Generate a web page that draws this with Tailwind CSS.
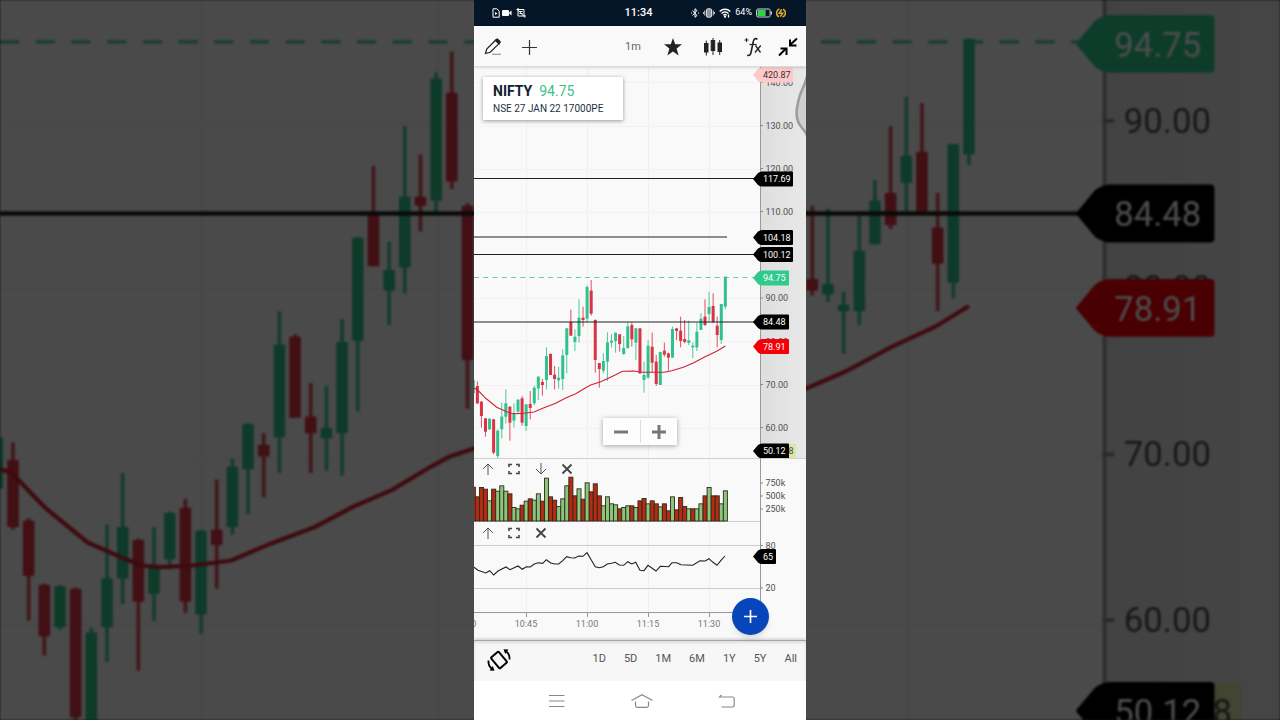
<!DOCTYPE html>
<html lang="en">
<head>
    <meta charset="UTF-8">
    <meta name="viewport" content="width=device-width, initial-scale=1.0">
    <title>NIFTY 17000PE | Chart</title>
    <script src="https://cdn.jsdelivr.net/npm/@tailwindcss/browser@4"></script>
</head>
<body class="relative min-h-screen overflow-hidden bg-[#4a4a4a] font-['Roboto',sans-serif]">
    <!-- Enlarged, dimmed chart behind the phone -->
    <div class="absolute inset-0 overflow-hidden" aria-hidden="true">
        <svg class="block h-full w-full blur-[1px]" viewBox="474 266.6 332 186.8" preserveAspectRatio="xMidYMid slice">
            <use href="#priceChart"></use>
        </svg>
        <div class="absolute inset-0 bg-black/70"></div>
    </div>

    <main class="relative mx-auto flex min-h-screen w-full max-w-[332px] flex-col overflow-hidden bg-[#f9f9f9]">
        <!-- Status bar -->
        <header class="grid h-[26px] grid-cols-[1fr_auto_1fr] items-center bg-[#061629] pr-5 pl-[17px] text-white">
            <div class="flex items-center gap-[1px]">
                <svg class="h-[10px] w-[10px]" viewBox="0 0 10 10" fill="none" stroke="#fff"><path d="M2 .8h3.800L8.200 3v6.200H2z"/><path d="M4 4l2.500 1.500L4 7z" fill="#fff" stroke="none"/></svg>
                <svg class="h-[10px] w-[10px]" viewBox="0 0 10 10" fill="#fff"><rect y="2" width="7" height="6" rx="1"/><path d="M7.300 4.300 9.500 2.500v5L7.300 5.700z"/></svg>
                <svg class="ml-[3px] h-[10px] w-[10px]" viewBox="0 0 10 10" fill="none" stroke="#fff"><path d="M.5 1.500h7.500v6.500M2 0v8h8"/><path d="M3.500 3.500h3M3.500 5.500h3M1 1l8 8.500"/></svg>
            </div>
            <time class="text-center text-[11px] font-medium">11:34</time>
            <div class="flex items-center justify-end gap-[4px]">
                <svg class="h-[10px] w-[8px] shrink-0" viewBox="0 0 8 10" fill="none" stroke="#fff"><path d="M1.500 2.500l4.500 5L4 9.300V.7L6 2.500l-4.500 5"/><path d="M0 5h1M7 5h1"/></svg>
                <svg class="h-[10px] w-[12px] shrink-0" viewBox="0 0 12 10" fill="none" stroke="#d5dae0"><rect x="3.500" y=".8" width="5" height="8.400" rx="1" fill="#8d959f"/><path d="M1.800 2.500v5M10.200 2.500v5M.4 4v2M11.600 4v2"/></svg>
                <svg class="h-[10px] w-[12px] shrink-0" viewBox="0 0 12 10" fill="none" stroke="#fff" stroke-width="1.300"><path d="M.7 3.500c3-3 7.600-3 10.600 0M2.500 5.500c2-2 5-2 7 0M4.300 7.300c1-.9 2.400-.9 3.400 0"/><circle cx="6" cy="8.700" r=".5" fill="#fff"/><path d="M9.500 6.500v3"/></svg>
                <span class="text-[9px]">64%</span>
                <svg class="h-[10px] w-[16px] shrink-0" viewBox="0 0 16 10"><rect x=".6" y="1" width="13.500" height="8" rx="1.500" fill="#061629" stroke="#d5dae0"/><rect x="1.600" y="2" width="8" height="6" fill="#35cf4c"/><path d="M15.500 3.500v3" stroke="#d5dae0"/></svg>
                <svg class="h-[10px] w-[10px] shrink-0" viewBox="0 0 10 10" fill="none" stroke="#d9a62a" stroke-width="1.600"><path d="M3 8.800A4.200 4.200 0 0 1 3.500 1M7 1.200a4.200 4.200 0 0 1-.5 7.800"/><path d="M5.800 1.500 3.300 5.200h3.400L4.200 8.600"/></svg>
            </div>
        </header>

        <!-- Toolbar -->
        <nav class="relative z-10 flex h-[41px] items-center border-b border-[#dcdcdc] bg-[#f9f9f9] pt-[2px] pr-[3px] pl-px shadow-sm">
            <button class="flex h-9 w-9 items-center justify-center" aria-label="Draw">
                <svg class="h-[18px] w-[18px]" viewBox="0 0 18 18" fill="none" stroke="#222" stroke-width="1.200"><path d="M1.500 15.500l1.200-4.500L12 1.800c.8-.8 1.500-.8 2.200-.1l1.300 1.200c.8.8.7 1.500 0 2.200L6.200 14.300z"/><path d="M11.500 2.500l3.500 3.500 1-2-3-2.800z" fill="#222"/><path d="M8 16.300h9" stroke="#999"/></svg>
            </button>
            <button class="flex h-9 w-9 items-center justify-center" aria-label="Add">
                <svg class="h-[15px] w-[15px]" viewBox="0 0 15 15" stroke="#333" stroke-width="1.200"><path d="M7.500 0v15M0 7.500h15"/></svg>
            </button>
            <button class="ml-auto h-9 w-10 text-[11px] text-[#666]">1m</button>
            <button class="flex h-9 w-10 items-center justify-center" aria-label="Favourites">
                <svg class="h-[18px] w-[18px]" viewBox="0 0 18 18" fill="#222"><path d="M9 0l2.200 6.300H18l-5.400 4.200 2 7L9 13.400l-5.600 4.100 2-7L0 6.300h6.800z"/></svg>
            </button>
            <button class="flex h-9 w-10 items-center justify-center" aria-label="Chart type">
                <svg class="h-[19px] w-[18px]" viewBox="0 0 18 19" fill="#222" stroke="#222"><rect x=".5" y="5.500" width="3.500" height="8.500"/><rect x="7.200" y="2.500" width="3.500" height="10"/><rect x="14" y="5" width="3.500" height="8.500"/><path d="M2.300 2.500v15M9 0v17M15.700 2v15"/></svg>
            </button>
            <button class="flex h-9 w-10 items-center justify-center" aria-label="Indicators">
                <svg class="h-[20px] w-[18px]" viewBox="0 0 18 20" fill="none" stroke="#222"><path d="M2.500 1v4M.5 3h4" stroke-width="1"/><path d="M13.500 2.300c-2-1.500-3.500-.6-4.200 2.200L7 15.500c-.5 2.600-1.800 3.600-3.700 2.500" stroke-width="1.600"/><path d="M5.500 7.500h7" stroke-width="1.200"/><path d="M11.500 8.500l5 7M16.800 8.500l-5.800 7" stroke-width="1.300"/></svg>
            </button>
            <button class="flex h-9 w-[30px] items-center justify-center" aria-label="Exit full screen">
                <svg class="h-[20px] w-[20px]" viewBox="0 0 20 20" fill="none" stroke="#000" stroke-width="2"><path d="M19 1.500l-6.500 6M1 18.500l6.500-6.500"/><path d="M12 2.500v6h6.500M2.500 11.500h6v6.500"/></svg>
            </button>
        </nav>

        <section class="relative">
            <!-- Price pane -->
            <div class="relative">
                <svg class="block w-full" viewBox="474 67 332 391" role="img" aria-label="NIFTY price chart">
                    <g id="priceChart"></g>
                    <path d="M807 76Q805 84 802 90T797 108T802 128T807 140" fill="#cfcfcf" stroke="#9b9b9b" stroke-width="2.500"/>
                </svg>
                <div class="absolute top-[10px] left-[9px] w-[140px] bg-white px-[10px] py-[4px] whitespace-nowrap shadow-[0_1px_4px_rgba(0,0,0,0.4)]">
                    <h1 class="flex items-baseline gap-[7px] text-[14px] leading-[20px] font-bold text-[#10202f]">NIFTY <span class="font-normal text-[#3cc486]">94.75</span></h1>
                    <p class="text-[10px] leading-[15px] text-[#24323f]">NSE 27 JAN 22 17000PE</p>
                </div>
                <div class="absolute bottom-[13px] left-[129px] flex h-[27px] w-[74px] items-center divide-x divide-[#ddd] bg-[#fdfdfd] shadow-[0_1px_5px_rgba(0,0,0,0.35)]">
                    <button class="flex h-[23px] flex-1 items-center justify-center" aria-label="Zoom out">
                        <svg class="h-[14px] w-[14px]" viewBox="0 0 14 14" stroke="#777" stroke-width="3"><path d="M0 7h14"/></svg>
                    </button>
                    <button class="flex h-[23px] flex-1 items-center justify-center" aria-label="Zoom in">
                        <svg class="h-[14px] w-[14px]" viewBox="0 0 14 14" stroke="#777" stroke-width="3"><path d="M0 7h14M7 0v14"/></svg>
                    </button>
                </div>
            </div>

            <!-- Volume pane -->
            <div class="relative">
                <svg class="block w-full" viewBox="474 458 332 64" role="img" aria-label="Volume" id="volumeChart"></svg>
                <div class="absolute top-0 left-0 flex h-[22px] items-center">
                    <button class="flex w-[27px] justify-center" aria-label="Move volume up"><svg class="h-3 w-3" viewBox="0 0 12 12" fill="none" stroke="#555"><path d="M6 12V1M1 6l5-5 5 5"/></svg></button>
                    <button class="flex w-[26px] justify-center" aria-label="Maximise volume"><svg class="h-3 w-3" viewBox="0 0 12 12" fill="none" stroke="#444" stroke-width="1.600"><path d="M1 4V1.500h3M8 1.500h3V4M11 8v2.500H8M4 10.500H1V8"/></svg></button>
                    <button class="flex w-[27px] justify-center" aria-label="Move volume down"><svg class="h-3 w-3" viewBox="0 0 12 12" fill="none" stroke="#555"><path d="M6 0v11M1 6l5 5 5-5"/></svg></button>
                    <button class="flex w-[26px] justify-center" aria-label="Close volume"><svg class="h-3 w-3" viewBox="0 0 12 12" fill="none" stroke="#444" stroke-width="1.800"><path d="M1.500 1.500l9 9M10.500 1.500l-9 9"/></svg></button>
                </div>
            </div>

            <!-- RSI pane and time axis -->
            <div class="relative">
                <svg class="block w-full" viewBox="474 522 332 118" role="img" aria-label="RSI" id="rsiChart"></svg>
                <div class="absolute top-0 left-0 flex h-[22px] items-center">
                    <button class="flex w-[27px] justify-center" aria-label="Move RSI up"><svg class="h-3 w-3" viewBox="0 0 12 12" fill="none" stroke="#555"><path d="M6 12V1M1 6l5-5 5 5"/></svg></button>
                    <button class="flex w-[26px] justify-center" aria-label="Maximise RSI"><svg class="h-3 w-3" viewBox="0 0 12 12" fill="none" stroke="#444" stroke-width="1.600"><path d="M1 4V1.500h3M8 1.500h3V4M11 8v2.500H8M4 10.500H1V8"/></svg></button>
                    <button class="flex w-[27px] justify-center" aria-label="Close RSI"><svg class="h-3 w-3" viewBox="0 0 12 12" fill="none" stroke="#444" stroke-width="1.800"><path d="M1.500 1.500l9 9M10.500 1.500l-9 9"/></svg></button>
                </div>
            </div>

            <button class="absolute right-[37px] bottom-[5px] flex h-[37px] w-[37px] items-center justify-center rounded-full bg-[#0646ba] shadow-md" aria-label="New order">
                <svg class="h-[13px] w-[13px]" viewBox="0 0 14 14" stroke="#fff" stroke-width="1.800"><path d="M7 0v14M0 7h14"/></svg>
            </button>
        </section>

        <!-- Range picker -->
        <div class="flex h-[41px] items-center border-t border-[#a5a5a5] bg-[#f7f7f7] pr-[9px] pb-[3px] pl-[13px] shadow-[0_-1px_3px_rgba(0,0,0,0.2),inset_0_2px_3px_rgba(0,0,0,0.1)]">
            <button aria-label="Rotate screen">
                <svg class="h-[24px] w-[24px]" viewBox="0 0 24 24" fill="none" stroke="#000"><rect x="7" y="5" width="10" height="14" rx="1" stroke-width="2" transform="rotate(-40 12 12)"/><path d="M22.500 11.500c.3-3.500-1-6.500-3.500-8.300M1.500 12.500c-.3 3.500 1 6.500 3.500 8.300" stroke-width="1.800"/><path d="M16.500 1.200l5 .2-3.300 4.500zM7.500 22.800l-5-.2 3.300-4.500z" fill="#000" stroke="none"/></svg>
            </button>
            <div class="ml-auto flex gap-[18px] text-[11px] text-[#555]">
                <button>1D</button>
                <button>5D</button>
                <button>1M</button>
                <button>6M</button>
                <button>1Y</button>
                <button>5Y</button>
                <button>All</button>
            </div>
        </div>

        <!-- System navigation -->
        <footer class="flex min-h-[39px] flex-1 items-center justify-center gap-16 bg-white pl-[3px]">
            <button aria-label="Recent apps"><svg class="h-[14px] w-[20px]" viewBox="0 0 20 14" stroke="#888" stroke-width="1.200"><path d="M2 1.500h15.500M2 7h15.500M2 12.500h15.500"/></svg></button>
            <button aria-label="Home"><svg class="h-[14px] w-[22px]" viewBox="0 0 22 14" fill="none" stroke="#888" stroke-width="1.200"><path d="M.5 6.500 11 .8l10.500 5.700M4.500 7.500v4c0 1 .6 1.800 1.800 1.800h9.400c1.200 0 1.800-.8 1.800-1.800v-4"/></svg></button>
            <button aria-label="Back"><svg class="h-[14px] w-[20px]" viewBox="0 0 20 14" fill="none" stroke="#888" stroke-width="1.200"><path d="M4.500.8 2.500 3h13c1 0 1.700.7 1.700 1.700v6.600c0 1-.7 1.700-1.700 1.700H4.500"/></svg></button>
        </footer>
    </main>

    <script>
        const GREEN = '#2fc28c';
        const RED = '#d93344';
        const xAt = i => 473.3 + i * 4.065;

        // colour, high, top, bottom, low (thirds of a unit below y=260)
        const candles = [
            ['g',360,360,400,417],['r',364,378,430,432],['r',423,425,468,503],['r',474,475,515,530],['g',475,476,508,510],
            ['r',477,478,578,583],['g',508,512,588,594],['g',428,470,508,535],['g',388,430,470,490],['r',439,440,488,542],
            ['g',430,460,482,503],['g',418,419,455,463],['r',408,415,488,497],['g',432,433,498,513],['r',393,432,444,478],
            ['g',377,383,430,436],['g',349,350,385,420],['r',357,366,375,407],['g',262,288,360,388],['r',280,282,345,345],
            ['r',318,344,357,388],['g',320,353,361,386],['g',268,286,357,390],['g',204,205,285,340],['r',149,186,227,227],
            ['g',208,230,246,273],['g',118,173,228,248],['r',140,173,180,200],['g',76,81,176,187],['r',60,92,161,167],
            ['r',178,180,300,338],['r',309,309,327,383],['g',280,303,332,340],['g',217,247,305,363],['g',222,242,248,263],
            ['g',218,218,243,278],['r',222,223,252,275],['g',228,264,282,284],['g',187,199,264,266],['r',188,195,238,260],
            ['g',205,205,248,300],['r',205,205,340,342],['g',305,345,360,398],['g',240,257,353,356],['r',218,260,308,338],
            ['r',285,305,372,378],['g',275,276,375,375],['r',248,272,284,290],['r',278,280,293,332],['g',200,207,293,293],
            ['r',205,205,213,240],['r',170,212,243,262],['r',180,237,246,250],['g',182,241,249,255],['g',247,257,262,295],
            ['g',188,215,262,273],['g',160,176,210,210],['r',118,170,195,198],['g',95,141,162,187],['r',100,138,187,187],
            ['r',170,197,225,262],['g',132,132,240,252],['g',50,50,140,148]
        ];

        const average = [
            [0,385],[9,388],[35,415],[68,442],[95,454],[110,460],[125,461],[150,460],[180,456],[210,443],[245,430],[275,414],
            [305,401],[335,383],[350,375],[380,365],[400,356],[425,344],[445,334],[480,333],[500,337],[570,337],[593,332],
            [628,322],[658,309],[693,290],[728,274],[754,258]
        ];

        // bar tops, thirds of a unit below y=455
        const volumes = [
            95,124,96,101,136,101,107,91,107,115,156,160,149,137,130,134,115,137,68,124,134,153,130,91,65,121,100,131,82,109,85,
            121,151,124,145,148,160,156,151,151,156,136,129,145,136,145,154,145,166,124,163,126,153,160,160,160,145,121,96,121,121,145,106
        ];
        const volumeColors = 'rrrrgrgggrggrgrggrgrrgggrrgrgrrrggggrggrgrrgrrgrrgrrrgrggrgrrgg';

        const rsi = [
            [0,337],[12,346],[35,354],[47,347],[59,360],[72,348],[96,336],[108,344],[132,333],[145,343],[157,335],[169,336],
            [181,327],[193,323],[206,325],[217,314],[230,324],[242,327],[254,327],[266,317],[278,305],[290,308],[302,309],
            [314,303],[327,304],[339,293],[352,315],[364,335],[376,338],[388,335],[400,327],[412,325],[424,322],[436,330],
            [449,331],[461,320],[473,327],[485,322],[498,346],[510,347],[522,331],[546,348],[559,334],[584,335],[594,323],
            [608,323],[621,329],[656,331],[678,317],[694,318],[705,311],[717,322],[729,331],[741,316],[753,303]
        ];

        const line = (points, top) => points.map(([x, y]) => `${(474 + x / 3).toFixed(1)},${(top + y / 3).toFixed(1)}`).join(' ');

        const tag = (y, text, fill, color = '#fff', right = 789) => `
            <path d="M753 ${y}L758 ${y - 6}Q760 ${y - 7.500} 762 ${y - 7.500}H${right - 1}Q${right} ${y - 7.500} ${right} ${y - 6.500}V${y + 6.500}Q${right} ${y + 7.500} ${right - 1} ${y + 7.500}H762Q760 ${y + 7.500} 758 ${y + 6}z" fill="${fill}"/>
            <text x="763" y="${y + 3.300}" font-size="9" fill="${color}">${text}</text>`;

        const axisLabel = (y, text) => `
            <path d="M760 ${y}h3" stroke="#888"/>
            <text x="765.500" y="${y + 3}" font-size="9" fill="#505050">${text}</text>`;

        const columns = (y1, y2) => [526, 587, 648, 709].map(x => `<path d="M${x}.500 ${y1}V${y2}" stroke="#f4eeee"/>`).join('');

        // Price pane
        document.getElementById('priceChart').innerHTML = `
            <defs><linearGradient id="axisShade"><stop offset="0" stop-color="#dedede"/><stop offset="1" stop-color="#e8e8e8"/></linearGradient></defs>
            <rect x="474" y="67" width="332" height="391" fill="#f9f9f9"/>
            <rect x="760" y="67" width="46" height="391" fill="url(#axisShade)"/>
            ${columns(67, 458)}
            ${[82, 126, 169, 212, 298, 341, 385, 428].map(y => `<path d="M474 ${y}.500H760" stroke="#f6f1f1"/>`).join('')}
            <path d="M760.500 67V458" stroke="#999"/>
            <path d="M474 277.500H754" stroke="#62cfa9" stroke-dasharray="5 4.260"/>
            ${candles.map(([c, high, top, bottom, low], i) => {
                const color = c === 'g' ? GREEN : RED;
                const x = xAt(i);
                return `<path d="M${x} ${260 + high / 3}V${260 + low / 3}" stroke="${color}" stroke-opacity=".85"/>
                    <rect x="${x - 1.500}" y="${260 + top / 3}" width="3" height="${(bottom - top) / 3}" fill="${color}"/>`;
            }).join('')}
            <path d="M474 178.500H754M474 237H727M474 254.500H754M474 322H754" stroke="#222" stroke-width="1.200"/>
            <polyline points="${line(average, 260)}" fill="none" stroke="#cf2233" stroke-width="1.100"/>
            ${axisLabel(82.500, '140.00')}${axisLabel(125.500, '130.00')}${axisLabel(168.500, '120.00')}${axisLabel(211.500, '110.00')}
            ${axisLabel(298, '90.00')}${axisLabel(341.500, '80.00')}${axisLabel(384.500, '70.00')}${axisLabel(427.500, '60.00')}
            ${tag(75, '420.87', '#ffc9c9', '#333', 793)}
            ${tag(179, '117.69', '#000', '#fff', 793)}
            ${tag(237.500, '104.18', '#000', '#fff', 793)}
            ${tag(254.500, '100.12', '#000', '#fff', 793)}
            ${tag(278, '94.75', '#2ecb8d')}
            ${tag(322, '84.48', '#000')}
            ${tag(346.500, '78.91', '#f50008')}
            <rect x="780" y="444" width="16" height="14" rx="1" fill="#dbe6a4"/>
            <text x="788.500" y="454.300" font-size="9" fill="#484848">8</text>
            ${tag(451, '50.12', '#000')}`;

        // Volume pane
        document.getElementById('volumeChart').innerHTML = `
            ${columns(458, 522)}
            <path d="M474 458.500H806" stroke="#d0d0d0"/>
            <path d="M474 521.500H760" stroke="#ccc"/>
            <path d="M760.500 458V522" stroke="#999"/>
            ${volumes.map((v, i) => `<rect x="${xAt(i) - 2}" y="${455.500 + v / 3}" width="4.065" height="${65.500 - v / 3}" fill="${volumeColors[i] === 'g' ? '#8cc47c' : '#b52a12'}" stroke="#2b2b1c" stroke-width=".9"/>`).join('')}
            ${axisLabel(483, '750k')}${axisLabel(496, '500k')}${axisLabel(509, '250k')}`;

        // RSI pane and time axis
        document.getElementById('rsiChart').innerHTML = `
            ${columns(522, 612)}
            <path d="M474 545.500H760M474 588.500H760" stroke="#ccc"/>
            <path d="M760.500 522V612.500H474" fill="none" stroke="#999"/>
            <polyline points="${line(rsi, 455)}" fill="none" stroke="#222" stroke-width="1.100"/>
            ${axisLabel(545.500, '80')}${axisLabel(588, '20')}
            ${tag(556.500, '65', '#000', '#fff', 776)}
            ${['10:30', '10:45', '11:00', '11:15', '11:30'].map((t, i) => `
                <path d="M${465.500 + i * 61} 612v5" stroke="#999"/>
                <text x="${465 + i * 61}" y="627" font-size="9" text-anchor="middle" fill="#777">${t}</text>`).join('')}`;
    </script>
</body>
</html>
